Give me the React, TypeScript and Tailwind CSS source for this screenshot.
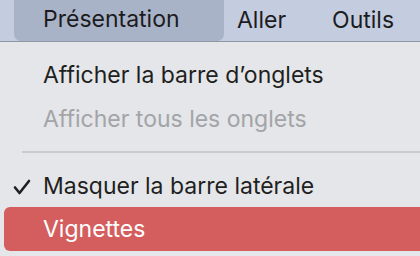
import React from "react";

export default function App() {
  return (
    <main
      className="w-[420px] h-[256px] overflow-hidden bg-[#e4e6e9] flex flex-col"
      style={{ fontFamily: "Inter, 'Noto Sans', sans-serif" }}
    >
      {/* menu bar */}
      <div className="h-[42px] bg-[#c4cce0] flex items-stretch pl-[14px] text-[23px] text-[#1c1c1e] border-b border-[#8e96a6]">
        <div className="w-[210px] bg-[#a9b3c8] rounded-b-[7px] flex items-center pl-[29px] -mt-[2px]">
          Présentation
        </div>
        <div className="flex items-center pl-[13px]">Aller</div>
        <div className="flex items-center pl-[46px]">Outils</div>
      </div>

      {/* dropdown */}
      <div className="flex-1 rounded-tl-[6px] bg-[#e4e6e9] pt-[11px] text-[23px] leading-[44px]">
        <div className="pl-[43px] text-[#1f1f21]">Afficher la barre d’onglets</div>
        <div className="pl-[43px] text-[#a2a4a8]">Afficher tous les onglets</div>
        <div className="ml-[22px] mt-[10px] mb-[11px] h-[2px] bg-[#c9cbce]" />
        <div className="relative pl-[43px] text-[#1f1f21]">
          <svg
            className="absolute left-[13px] top-[15px]"
            width="18"
            height="16"
            viewBox="0 0 18 16"
            fill="none"
          >
            <path d="M2 8.5 L6.5 14 L16 2" stroke="#1f1f21" strokeWidth="2.6" strokeLinecap="round" strokeLinejoin="round" />
          </svg>
          Masquer la barre latérale
        </div>
        <div className="ml-[4px] -mt-[1px] h-[44px] rounded-l-[6px] bg-[#d45e5e] pl-[39px] flex items-center text-white">
          Vignettes
        </div>
      </div>
    </main>
  );
}
